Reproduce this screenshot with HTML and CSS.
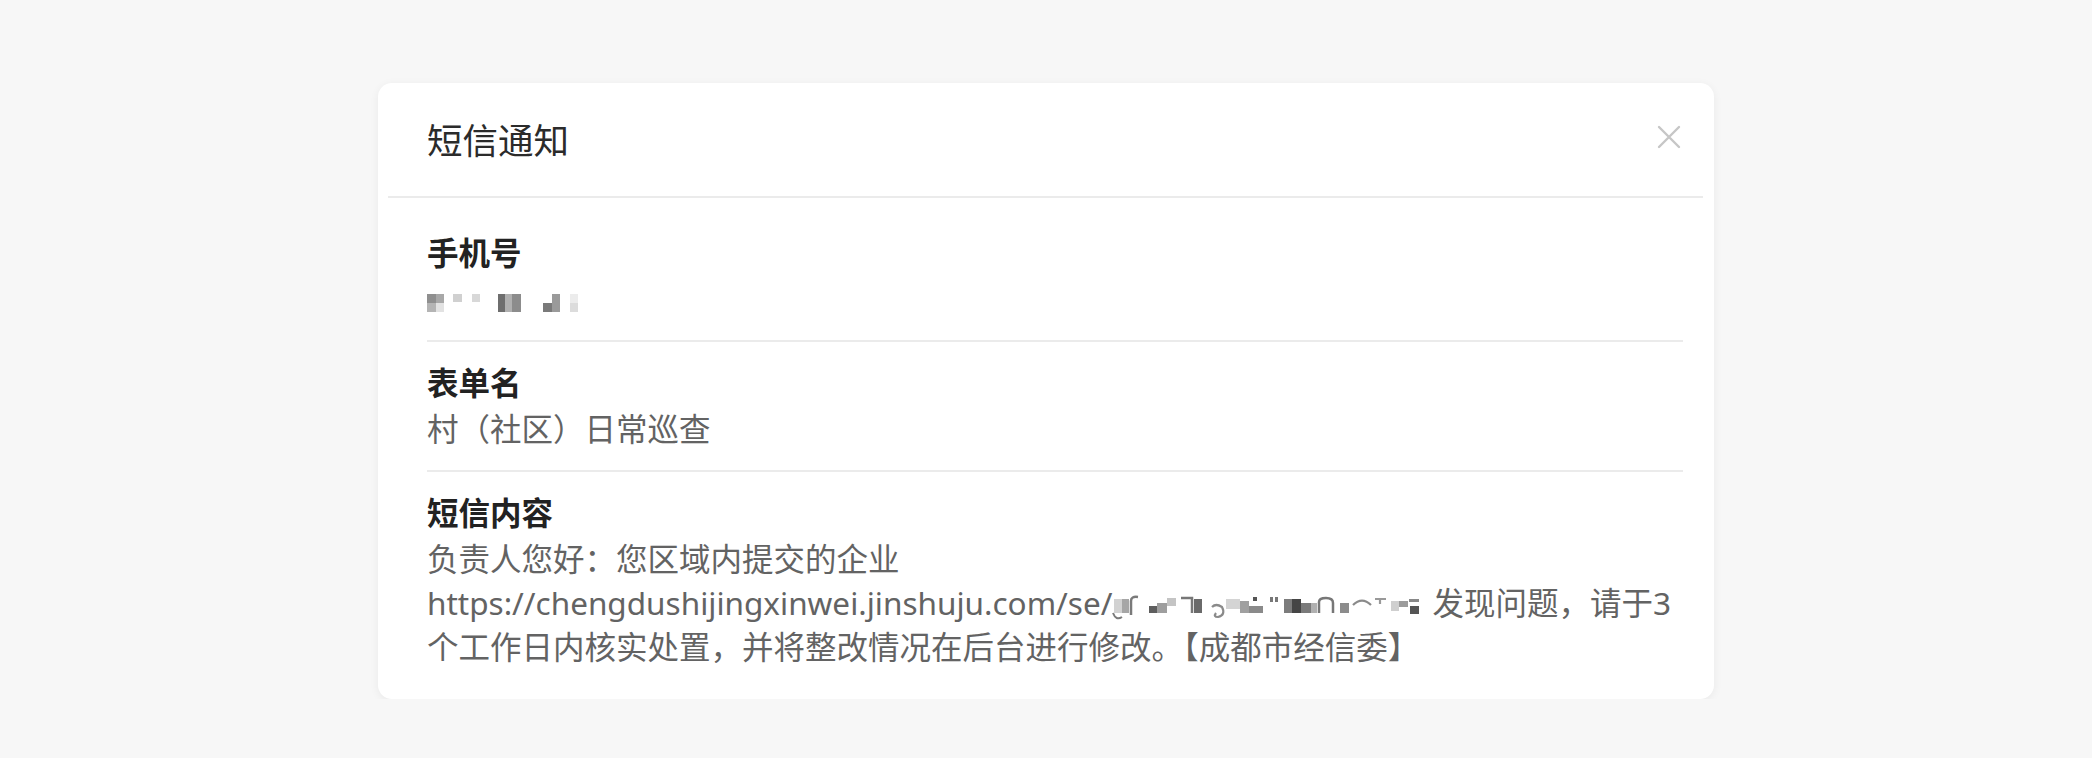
FILE: index.html
```html
<!DOCTYPE html>
<html lang="zh-CN">
<head>
    <meta charset="UTF-8">
    <meta name="viewport" content="width=device-width, initial-scale=1.0">
    <title>短信通知</title>
    <link rel="stylesheet" href="styles.css">
</head>
<body>

    <div class="sms-dialog">
        <div class="dialog-header">
            <div class="dialog-title">短信通知</div>
            <span class="close-button">
                <svg width="24" height="24" viewBox="0 0 24 24">
                    <path d="M2 2 L22 22 M22 2 L2 22" stroke="currentColor" stroke-width="2.4" stroke-linecap="round" fill="none"/>
                </svg>
            </span>
        </div>
        <div class="header-line"></div>

        <div class="dialog-body">
            <div class="field">
                <div class="field-label">手机号</div>
                <div class="field-value">
                    <!-- number is pixelated in the source -->
                    <svg class="mosaic phone-mosaic" width="152" height="18" viewBox="0 0 152 18">
                        <rect x="0" y="0" width="9" height="9" fill="#8f8f8f"/>
                        <rect x="9" y="0" width="8" height="9" fill="#a8a8a8"/>
                        <rect x="0" y="9" width="9" height="9" fill="#b4b4b4"/>
                        <rect x="9" y="9" width="8" height="9" fill="#e2e2e2"/>
                        <rect x="26" y="0" width="9" height="8" fill="#d0d0d0"/>
                        <rect x="45" y="0" width="8" height="8" fill="#d8d8d8"/>
                        <rect x="71" y="0" width="7" height="18" fill="#6e6e6e"/>
                        <rect x="78" y="0" width="7" height="18" fill="#b0b0b0"/>
                        <rect x="85" y="0" width="9" height="18" fill="#8c8c8c"/>
                        <rect x="116" y="9" width="9" height="9" fill="#7a7a7a"/>
                        <rect x="125" y="0" width="8" height="18" fill="#9a9a9a"/>
                        <rect x="143" y="0" width="8" height="9" fill="#ececec"/>
                        <rect x="143" y="9" width="8" height="9" fill="#dcdcdc"/>
                    </svg>
                </div>
            </div>

            <div class="field">
                <div class="field-label">表单名</div>
                <div class="field-value">村（社区）日常巡查</div>
            </div>

            <div class="field">
                <div class="field-label">短信内容</div>
                <div class="field-value">负责人您好：您区域内提交的企业<span class="link-text">https://chengdushijingxinwei.jinshuju.com/se/<svg class="mosaic url-mosaic" width="312" height="28" viewBox="0 0 312 28">
                            <rect x="2" y="6" width="8" height="14" fill="#d2d2d2"/>
                            <rect x="10" y="6" width="7" height="14" fill="#a6a6a6"/>
                            <path d="M19 22 V8 Q19 3 26 4" stroke="#7a7a7a" stroke-width="2.5" fill="none"/>
                            <path d="M1 20 Q4 28 10 24" stroke="#7a7a7a" stroke-width="2" fill="none"/>
                            <rect x="37" y="13" width="8" height="7" fill="#5e5e5e"/>
                            <rect x="45" y="10" width="10" height="10" fill="#9e9e9e"/>
                            <rect x="55" y="5" width="9" height="8" fill="#c4c4c4"/>
                            <path d="M69 5 H80 V20" stroke="#777" stroke-width="2.5" fill="none"/>
                            <rect x="82" y="6" width="8" height="14" fill="#6a6a6a"/>
                            <path d="M100 14 Q104 10 110 14 Q114 22 106 24 Q101 24 104 20" stroke="#8a8a8a" stroke-width="2.2" fill="none"/>
                            <rect x="114" y="6" width="14" height="10" fill="#d4d4d4"/>
                            <rect x="128" y="8" width="9" height="12" fill="#a0a0a0"/>
                            <rect x="137" y="13" width="14" height="7" fill="#8a8a8a"/>
                            <rect x="141" y="4" width="4" height="4" fill="#555"/>
                            <rect x="158" y="4" width="3" height="5" fill="#777"/>
                            <rect x="163" y="4" width="3" height="5" fill="#777"/>
                            <rect x="172" y="6" width="8" height="14" fill="#7c7c7c"/>
                            <rect x="180" y="6" width="9" height="14" fill="#454545"/>
                            <rect x="189" y="10" width="10" height="10" fill="#7a7a7a"/>
                            <rect x="199" y="10" width="6" height="10" fill="#b0b0b0"/>
                            <path d="M207 20 V9 Q207 5 214 5 Q221 5 221 10 V20" stroke="#777" stroke-width="2.5" fill="none"/>
                            <rect x="228" y="10" width="9" height="10" fill="#8c8c8c"/>
                            <path d="M241 12 Q250 3 259 12" stroke="#8a8a8a" stroke-width="2.2" fill="none"/>
                            <path d="M263 6 H274 M268 6 V11" stroke="#999" stroke-width="2.2" fill="none"/>
                            <rect x="279" y="8" width="8" height="10" fill="#cfcfcf"/>
                            <rect x="287" y="8" width="9" height="6" fill="#9c9c9c"/>
                            <rect x="297" y="6" width="10" height="3" fill="#888"/>
                            <rect x="298" y="13" width="9" height="8" fill="#555"/>
                        </svg></span> 发现问题，请于3个工作日内核实处置，并将整改情况在后台进行修改。【成都市经信委】</div>
            </div>
        </div>
    </div>

</body>
</html>
```

FILE: styles.css
```css
/* Page colours */
:root {
    --page-background: #f7f7f7;
    --card-background: #ffffff;
    --title-color: #2b2b2b;
    --label-color: #222222;
    --value-color: #636363;
    --line-color: #ebebeb;
    --icon-color: #c6c6c6;
}

* {
    margin: 0;
    padding: 0;
    box-sizing: border-box;
}

body {
    font-family: "Noto Sans", "Noto Sans CJK SC", sans-serif;
    background-color: var(--page-background);
    padding-top: 83px;
}

/* Dialog card */
.sms-dialog {
    width: 1336px;
    margin: 0 auto;
    background-color: var(--card-background);
    border-radius: 14px;
    box-shadow: 0 2px 10px rgba(0, 0, 0, 0.06);
}

.dialog-header {
    display: flex;
    justify-content: space-between;
    align-items: center;
    height: 113px;
    padding: 0 33px 0 49px;
}

.dialog-title {
    font-size: 35.5px;
    font-weight: 400;
    color: var(--title-color);
    line-height: 1;
    margin-top: 2px;
}

.close-button {
    display: flex;
    width: 24px;
    height: 24px;
    margin-top: -6px;
    color: var(--icon-color);
    cursor: pointer;
}

.header-line {
    height: 2px;
    margin: 0 11px 0 10px;
    background-color: var(--line-color);
}

/* Fields */
.dialog-body {
    padding: 14px 31px 11px 49px;
}

.field {
    padding: 19px 0;
    border-bottom: 2px solid var(--line-color);
}

.field:last-child {
    border-bottom: none;
}

.field-label {
    font-size: 31.5px;
    font-weight: 700;
    line-height: 44px;
    color: var(--label-color);
}

.field-value {
    font-size: 31.5px;
    line-height: 44px;
    margin-top: 2px;
    color: var(--value-color);
}

.link-text {
    white-space: nowrap;
}

.mosaic {
    display: inline-block;
}

.phone-mosaic {
    vertical-align: -1px;
}

.url-mosaic {
    vertical-align: -6px;
}
```
